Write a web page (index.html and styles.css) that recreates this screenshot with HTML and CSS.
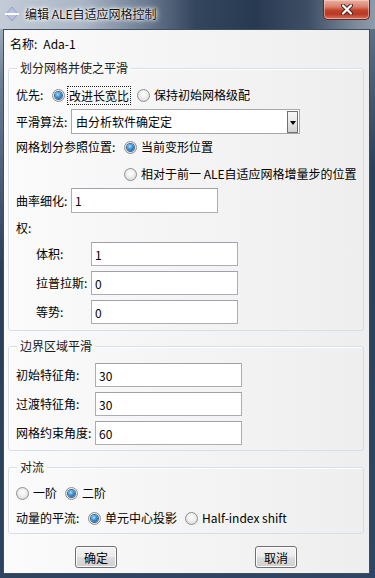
FILE: index.html
```html
<!DOCTYPE html>
<html>
<head>
<meta charset="utf-8">
<title>编辑 ALE自适应网格控制</title>
<link rel="stylesheet" href="styles.css">
</head>
<body>
<div class="window">
    <div class="titlebar">
        <svg class="app-icon" width="14" height="14" viewBox="0 0 14 14">
            <polygon points="7,0 13,7 7,14 1,7" fill="#b7bfe3" stroke="#8c95c4" stroke-width="0.8"/>
            <rect x="0" y="6" width="14" height="2" fill="#ffffff"/>
        </svg>
        <span class="title">编辑 ALE自适应网格控制</span>
        <div class="close-btn">
            <svg width="12" height="11" viewBox="0 0 12 11">
                <path d="M2 1.5 L10 9.5 M10 1.5 L2 9.5" stroke="#4a2220" stroke-width="4" stroke-linecap="round"/>
                <path d="M2 1.5 L10 9.5 M10 1.5 L2 9.5" stroke="#ffffff" stroke-width="2.2" stroke-linecap="round"/>
            </svg>
        </div>
    </div>

    <div class="client">
        <div class="row name-row">
            <span>名称:</span><span class="name-value">Ada-1</span>
        </div>

        <fieldset class="group g-mesh">
            <legend>划分网格并使之平滑</legend>
            <div class="row r-prio">
                <span class="lbl w-prio">优先:</span>
                <span class="opt"><span class="radio on"></span><span class="focus">改进长宽比</span></span>
                <span class="opt"><span class="radio"></span><span>保持初始网格级配</span></span>
            </div>
            <div class="row r-algo">
                <span class="lbl w-55">平滑算法:</span>
                <div class="combo">
                    <span class="combo-text">由分析软件确定定</span>
                    <span class="combo-btn"><span class="arrow"></span></span>
                </div>
            </div>
            <div class="row r-ref">
                <span class="lbl w-ref">网格划分参照位置:</span>
                <span class="opt"><span class="radio on"></span><span>当前变形位置</span></span>
            </div>
            <div class="row r-ref2">
                <span class="opt"><span class="radio"></span><span>相对于前一 ALE自适应网格增量步的位置</span></span>
            </div>
            <div class="row r-curv">
                <span class="lbl w-55">曲率细化:</span>
                <input class="field" type="text" value="1">
            </div>
            <div class="row r-weight">
                <span class="lbl">权:</span>
            </div>
            <div class="weights">
                <div class="row r-w">
                    <span class="lbl w-55">体积:</span>
                    <input class="field" type="text" value="1">
                </div>
                <div class="row r-w">
                    <span class="lbl w-55">拉普拉斯:</span>
                    <input class="field" type="text" value="0">
                </div>
                <div class="row r-w">
                    <span class="lbl w-55">等势:</span>
                    <input class="field" type="text" value="0">
                </div>
            </div>
        </fieldset>

        <fieldset class="group g-border">
            <legend>边界区域平滑</legend>
            <div class="row r-w">
                <span class="lbl w-79">初始特征角:</span>
                <input class="field" type="text" value="30">
            </div>
            <div class="row r-w">
                <span class="lbl w-79">过渡特征角:</span>
                <input class="field" type="text" value="30">
            </div>
            <div class="row r-w">
                <span class="lbl w-79">网格约束角度:</span>
                <input class="field" type="text" value="60">
            </div>
        </fieldset>

        <fieldset class="group g-adv">
            <legend>对流</legend>
            <div class="row r-w">
                <span class="opt"><span class="radio"></span><span>一阶</span></span>
                <span class="opt"><span class="radio on"></span><span>二阶</span></span>
            </div>
            <div class="row r-w r-mom">
                <span class="lbl w-72">动量的平流:</span>
                <span class="opt"><span class="radio on"></span><span>单元中心投影</span></span>
                <span class="opt"><span class="radio"></span><span>Half-index shift</span></span>
            </div>
        </fieldset>

        <div class="buttons">
            <button class="btn">确定</button>
            <button class="btn">取消</button>
        </div>
    </div>
</div>
</body>
</html>
```

FILE: styles.css
```css
html, body {
    margin: 0;
    padding: 0;
}
body {
    font-family: "Noto Sans CJK SC", "Liberation Sans", sans-serif;
    font-size: 12px;
    line-height: 16px;
    color: #000;
}
.window {
    width: 375px;
    height: 578px;
    display: flex;
    flex-direction: column;
    background: linear-gradient(165deg, #b7c3d1 0%, #6d7f95 12%, #2c3f58 40%, #2f4564 100%);
    overflow: hidden;
}
.titlebar {
    height: 29px;
    flex: none;
    display: flex;
    align-items: flex-start;
    padding-left: 5px;
    background: linear-gradient(to right, #c3ccd7 0%, #aab6c5 22%, #6f7f94 38%, #34465e 52%, #283a52 68%, #3d4e64 82%, #7d8b9c 95%, #8e9bab 100%);
}
.app-icon {
    margin-top: 7px;
    flex: none;
}
.title {
    margin-left: 6px;
    margin-top: 6px;
    color: #111;
    text-shadow: 0 0 6px #fff, 0 0 4px #fff, 0 0 2px #fff;
}
.close-btn {
    margin-left: auto;
    margin-right: 5px;
    width: 47px;
    height: 20px;
    box-sizing: border-box;
    border: 1px solid #5e2b27;
    border-top: none;
    border-radius: 0 0 5px 5px;
    background: linear-gradient(#e9b2a4 0%, #d9816d 35%, #c2412a 55%, #b73a26 75%, #d77661 100%);
    box-shadow: inset 0 0 0 1px rgba(255, 220, 210, 0.5);
    display: flex;
    align-items: center;
    justify-content: center;
}

.client {
    flex: none;
    height: 545px;
    margin: 0 5px 0 3px;
    box-sizing: border-box;
    border: 1px solid #3e4d60;
    background: linear-gradient(to right, #fbfbfb 0%, #f4f4f4 50%, #eeeeee 100%);
    display: flex;
    flex-direction: column;
}

.row {
    display: flex;
    align-items: center;
    flex: none;
}
.name-row {
    height: 28px;
    padding-left: 6px;
}
.name-value {
    margin-left: 6px;
}

.group {
    margin: 0 5px 0 4px;
    padding: 0 7px;
    min-width: 0;
    border: 1px solid #d5dfe5;
    border-radius: 3px;
    box-shadow: inset 1px 1px 0 #fff;
}
.group legend {
    padding: 0 3px;
    margin-left: 1px;
    line-height: 16px;
    color: #1b1b1b;
}
.g-mesh {
    margin-top: 2px;
    padding-top: 7px;
    padding-bottom: 6px;
}
.g-border {
    margin-top: 7px;
    padding-top: 9px;
    padding-bottom: 5px;
}
.g-adv {
    margin-top: 8px;
    padding-top: 6px;
    padding-bottom: 3px;
}

.lbl {
    flex: none;
}
.w-prio { width: 36px; }
.w-55 { width: 55px; }
.w-72 { width: 72px; }
.w-79 { width: 79px; }
.w-ref { width: 108px; }

.r-prio { height: 24px; }
.r-algo { height: 25px; margin-top: 2px; }
.r-ref { height: 26px; }
.r-ref2 { height: 28px; padding-left: 108px; }
.r-curv { height: 25px; }
.r-weight { height: 29px; }
.r-w { height: 24px; }
.r-w + .r-w { margin-top: 5px; }
.r-mom { margin-top: 1px !important; }
.weights {
    padding-left: 20px;
}

.opt {
    display: flex;
    align-items: center;
    gap: 4px;
    white-space: nowrap;
}
.opt + .opt {
    margin-left: 8px;
}
.radio {
    width: 13px;
    height: 13px;
    flex: none;
    box-sizing: border-box;
    border-radius: 50%;
    border: 1px solid #8f9090;
    background: radial-gradient(circle at 50% 40%, #ffffff 0%, #eeeeee 45%, #cfcfcf 100%);
    display: flex;
    align-items: center;
    justify-content: center;
}
.radio.on::after {
    content: "";
    width: 7px;
    height: 7px;
    border-radius: 50%;
    background: radial-gradient(circle at 40% 35%, #a6e0ff 0%, #3c8fd0 45%, #0f4a86 100%);
    box-shadow: 0 0 0 1px #3b6a98;
}
.focus {
    border: 1px dotted #222;
    padding: 1px 1px 0;
    margin: 0 -2px 0 -2px;
}

.combo {
    width: 229px;
    height: 25px;
    box-sizing: border-box;
    border: 1px solid #a9a9a9;
    background: #fff;
    display: flex;
    align-items: center;
}
.combo-text {
    flex: 1;
    padding-left: 4px;
}
.combo-btn {
    width: 11px;
    height: 22px;
    margin-right: 1px;
    box-sizing: border-box;
    border: 1px solid #6f6f6f;
    background: linear-gradient(#f7f7f7 0%, #e8e8e8 50%, #d2d2d2 100%);
    display: flex;
    align-items: center;
    justify-content: center;
}
.arrow {
    width: 0;
    height: 0;
    border-left: 3px solid transparent;
    border-right: 3px solid transparent;
    border-top: 4px solid #000;
    margin-top: 2px;
}

.field {
    width: 147px;
    height: 24px;
    box-sizing: border-box;
    margin: 0;
    border: 1px solid #abadb3;
    border-top-color: #9ea2a8;
    padding: 0 3px;
    font-family: inherit;
    font-size: 12px;
    color: #000;
    background: #fff;
    outline: none;
}
.r-curv .field {
    height: 25px;
}

.buttons {
    display: flex;
    margin-top: 12px;
    padding-left: 71px;
    gap: 138px;
}
.btn {
    width: 42px;
    height: 22px;
    box-sizing: border-box;
    padding: 0;
    border: 1px solid #707070;
    border-radius: 3px;
    font-family: inherit;
    font-size: 12px;
    color: #000;
    background: linear-gradient(#f3f3f3 0%, #ebebeb 48%, #dddddd 52%, #cfcfcf 100%);
    box-shadow: inset 0 0 0 1px #fcfcfc;
}
```
